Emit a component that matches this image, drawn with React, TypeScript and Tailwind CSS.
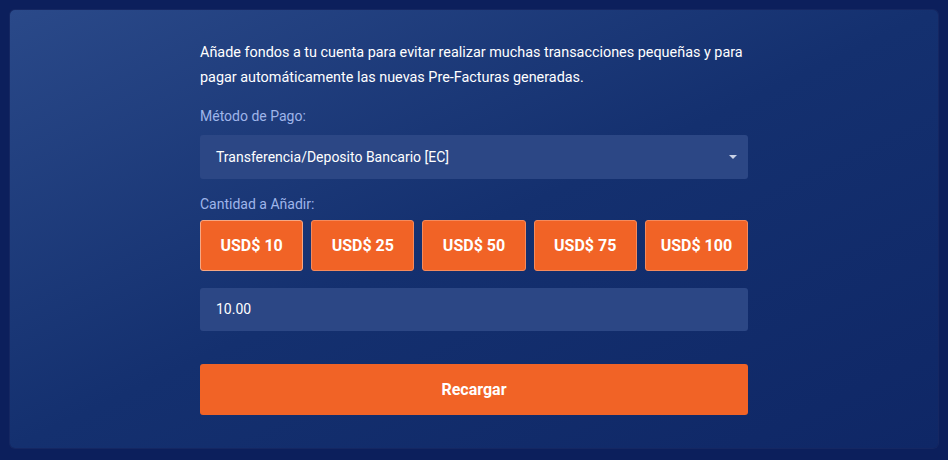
export default function App() {
  const amounts = [10, 25, 50, 75, 100];
  const selected = 10;

  return (
    <div
      className="min-h-[460px] w-full bg-[#0c1f5c] p-[10px] text-white"
      style={{ fontFamily: "Roboto, 'Liberation Sans', sans-serif" }}
    >
      <div className="h-[438px] rounded-[5px] bg-gradient-to-br from-[#2a4989] via-[#14306f] to-[#0f2766] shadow-[0_0_0_1px_rgba(255,255,255,0.04)]">
        <div className="mx-auto w-[548px] pt-[30px]">
          <p className="text-[14.4px] leading-[25px] text-white">
            Añade fondos a tu cuenta para evitar realizar muchas transacciones pequeñas y para
            pagar automáticamente las nuevas Pre-Facturas generadas.
          </p>

          <label className="mt-[16px] block text-[14px] leading-[20px] text-[#9fb5ea]">
            Método de Pago:
          </label>
          <div className="mt-[9px] flex h-[44px] items-center justify-between rounded-[3px] bg-[#2c4785] pl-[16px] pr-[11px]">
            <span className="text-[14px]">Transferencia/Deposito Bancario [EC]</span>
            <svg width="8" height="5" viewBox="0 0 8 5" className="mt-[1px]">
              <path d="M0 0h8L4 4z" fill="#c9d2e6" />
            </svg>
          </div>

          <label className="mt-[15px] block text-[14px] leading-[20px] text-[#9fb5ea]">
            Cantidad a Añadir:
          </label>
          <div className="mt-[6px] grid grid-cols-5 gap-[8px]">
            {amounts.map((a) => (
              <button
                key={a}
                className={
                  a === selected
                    ? "h-[51px] rounded-[3px] border border-[#f6a783] bg-[#f16326] text-[16px] font-bold"
                    : "h-[51px] rounded-[3px] border border-[#f58a5c] bg-[#f16326] text-[16px] font-bold"
                }
              >
                USD$ {a}
              </button>
            ))}
          </div>

          <div className="mt-[17px] flex h-[43px] items-center rounded-[3px] bg-[#2c4785] px-[16px] text-[14px]">
            10.00
          </div>

          <button className="mt-[33px] h-[51px] w-full rounded-[3px] bg-[#f16326] text-[16px] font-bold">
            Recargar
          </button>
        </div>
      </div>
    </div>
  );
}
